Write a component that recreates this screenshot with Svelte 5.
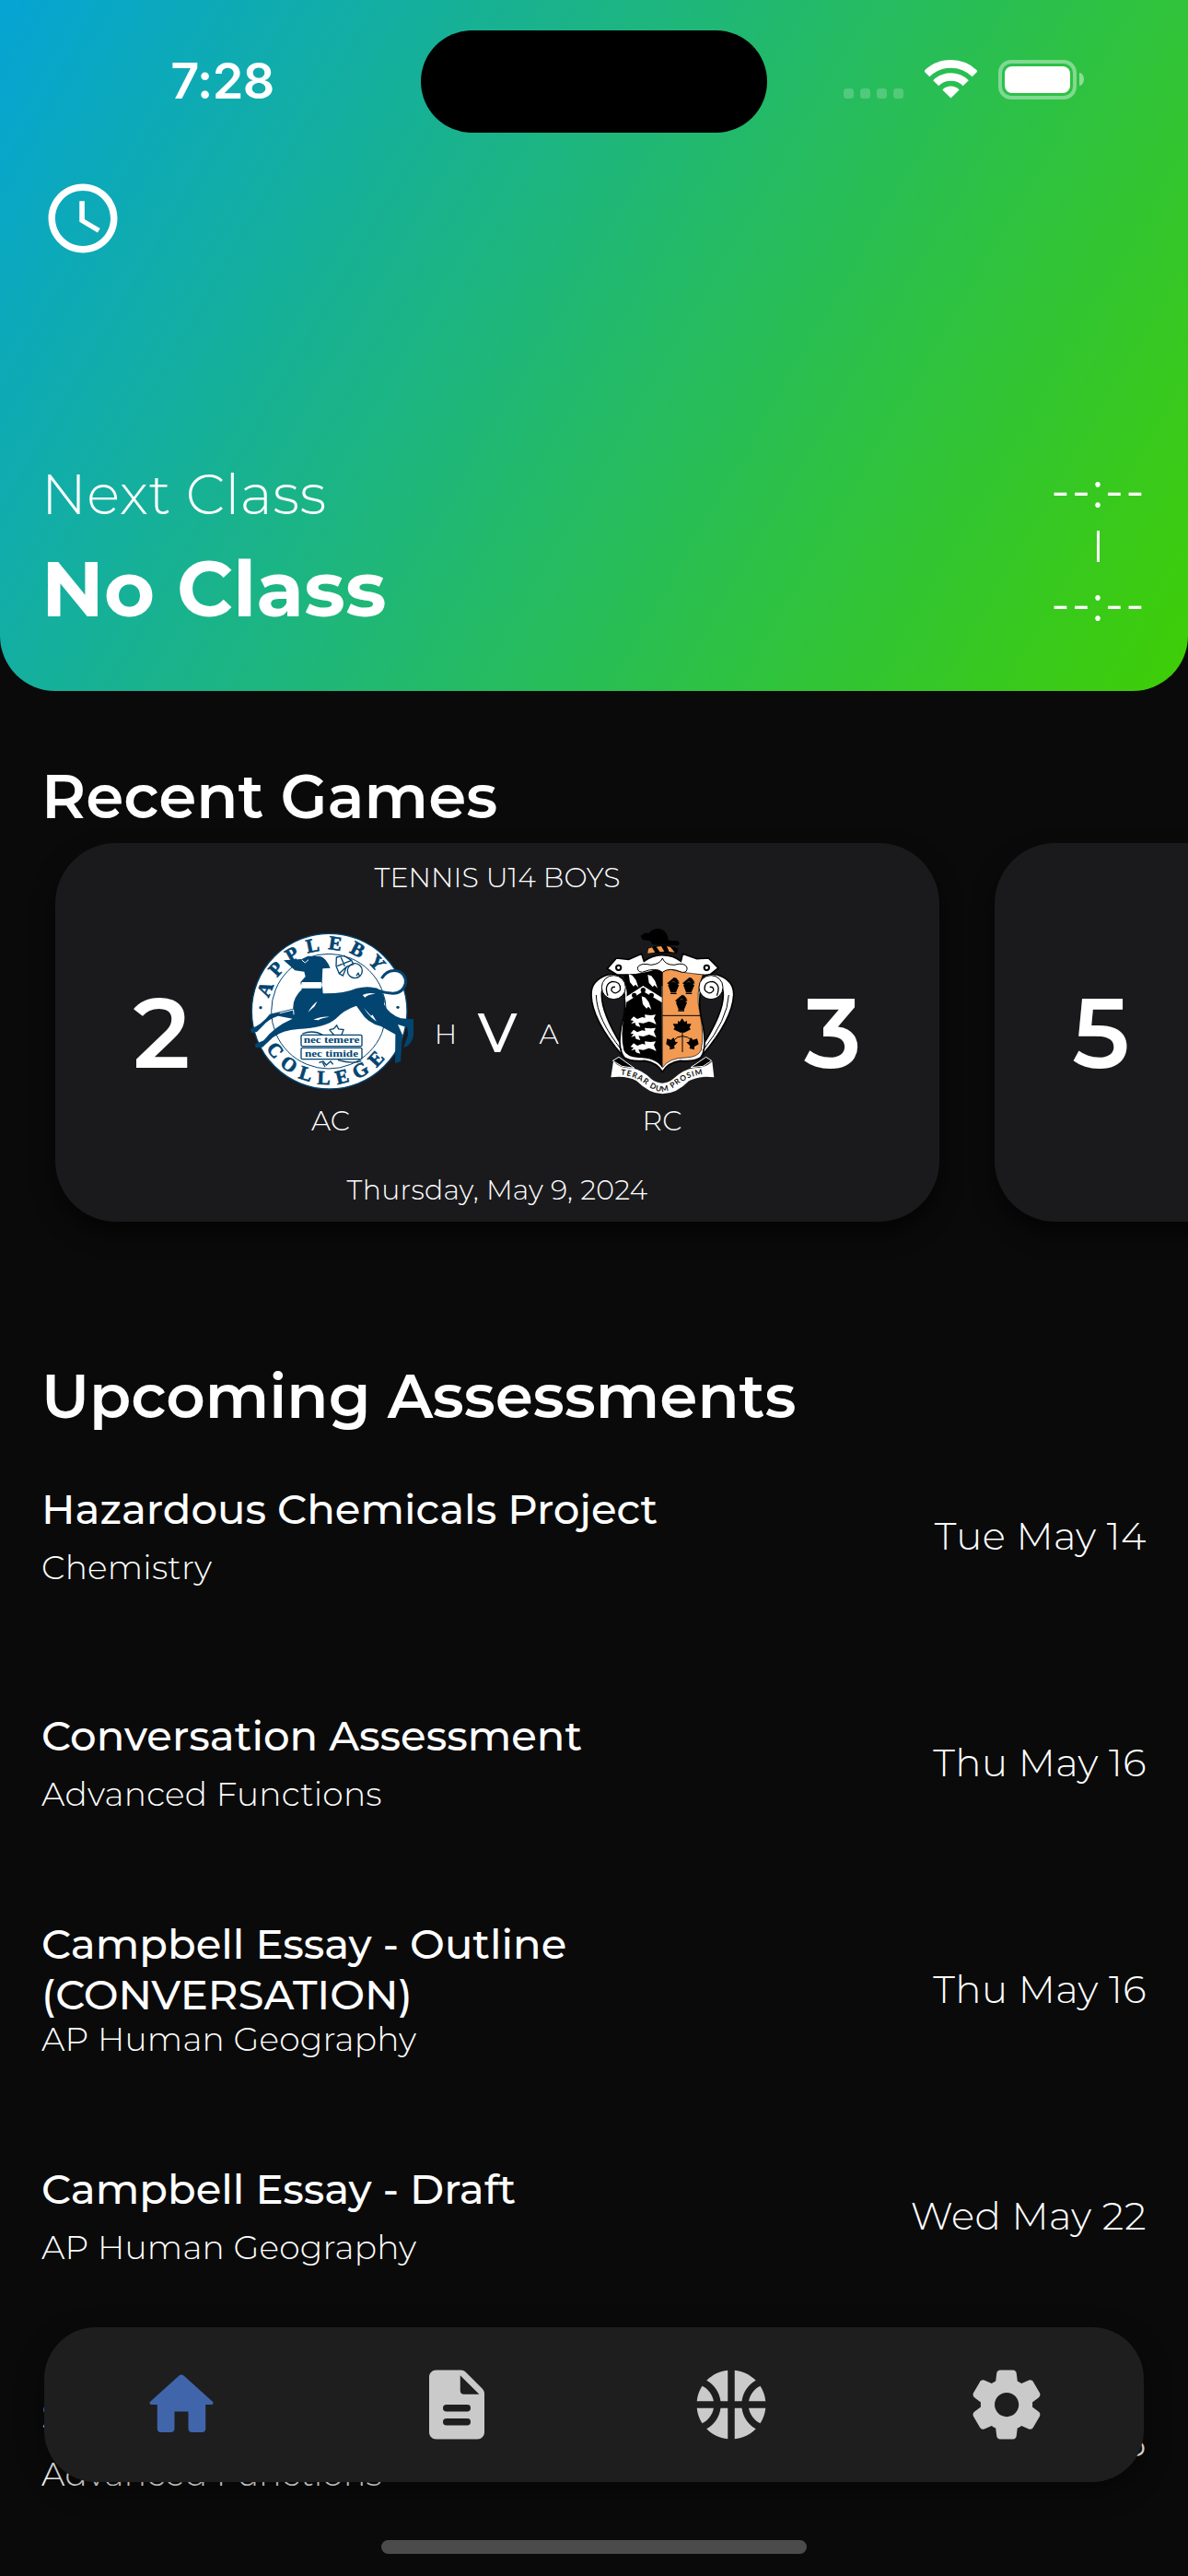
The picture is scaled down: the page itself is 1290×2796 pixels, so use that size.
<script>
  const assessments = [
    { title: ['Hazardous Chemicals Project'], course: 'Chemistry', due: 'Tue May 14' },
    { title: ['Conversation Assessment'], course: 'Advanced Functions', due: 'Thu May 16' },
    { title: ['Campbell Essay - Outline', '(CONVERSATION)'], course: 'AP Human Geography', due: 'Thu May 16' },
    { title: ['Campbell Essay - Draft'], course: 'AP Human Geography', due: 'Wed May 22' },
    { title: ['S'], course: 'Advanced Functions', due: 'Thu May 23' }
  ];
</script>

<div class="screen">
  <header>
    <div class="status">
      <div class="clock">7:28</div>
      <div class="island"></div>
      <div class="indicators">
        <div class="signal"><i></i><i></i><i></i><i></i></div>
        <svg class="wifi" viewBox="311 46 172 126">
          <g fill="none" stroke="#fff" stroke-width="26">
            <path d="M317.8 91.8A112 112 0 0 1 476.2 91.8" />
            <path d="M347.9 121.9A69.5 69.5 0 0 1 446.1 121.9" />
          </g>
          <path d="M397 171L369.4 143.4Q382 132 397 132T424.6 143.4Z" fill="#fff" />
        </svg>
        <div class="battery"><div class="charge"></div></div>
        <div class="nub"></div>
      </div>
    </div>
    <svg class="schedule" viewBox="0 0 24 24" fill="#fff">
      <path d="M11.99 2C6.47 2 2 6.48 2 12s4.47 10 9.99 10C17.52 22 22 17.52 22 12S17.52 2 11.99 2zM12 20c-4.42 0-8-3.58-8-8s3.58-8 8-8 8 3.58 8 8-3.58 8-8 8z" />
      <path d="M12.5 7H11v6l5.25 3.15.75-1.23-4.5-2.67z" />
    </svg>
    <div class="next">
      <div>
        <div class="label">Next Class</div>
        <div class="name">No Class</div>
      </div>
      <div class="times">
        <span>--:--</span>
        <b></b>
        <span>--:--</span>
      </div>
    </div>
  </header>

  <h2 class="games-title">Recent Games</h2>
  <div class="games">
    <article class="card">
      <div class="sport">TENNIS U14 BOYS</div>
      <div class="match">
        <div class="score">2</div>
        <div class="team">
          <svg viewBox="86 54 540 540">
            <defs>
              <path id="arc-top" d="M152 323A200 200 0 0 1 552 323" />
              <path id="arc-bottom" d="M114 323A238 238 0 0 0 590 323" />
            </defs>
            <circle cx="352" cy="323" r="253" fill="#fff" stroke="#034571" stroke-width="4" />
            <circle cx="350" cy="323" r="187" fill="none" stroke="#034571" stroke-width="3" />
            <g class="seal" fill="#034571">
              <text font-size="64" letter-spacing="25"><textPath href="#arc-top" startOffset="42">APPLEBY</textPath></text>
              <text font-size="64" letter-spacing="23"><textPath href="#arc-bottom" startOffset="126">COLLEGE</textPath></text>
              <circle cx="128" cy="311" r="5" />
              <circle cx="575" cy="310" r="5" />
            </g>
            <circle cx="563" cy="229" r="38" fill="#fff" />
            <path d="M522 216Q540 186 572 191Q603 200 600 232Q590 268 552 264Q520 262 500 250" fill="none" stroke="#034571" stroke-width="9" />
            <path d="M203 157L262 153L282 143L322 144Q340 148 355 182L330 184L328 228L331 265Q400 266 440 248Q490 236 520 256Q538 285 530 300Q545 332 585 346L632 349L626 402Q618 438 593 440L608 402L606 376L575 366L590 400L584 486L566 492L567 398L520 372Q475 360 455 326L440 305Q400 318 372 348Q340 376 250 381Q200 384 168 408L134 440L112 442L110 430L138 418Q170 374 232 347L185 338Q150 350 136 370L116 390L98 394L95 380Q130 368 158 332L234 314Q232 280 262 252L258 228L274 210L270 194L240 190Z" fill="#034571" />
            <path d="M262 228H325Q332 237 325 248H258M282 326Q296 302 313 290L303 308L298 312ZM460 270Q480 260 502 266Q476 267 468 278ZM300 350Q330 338 352 341Q325 345 316 352ZM464 312Q485 344 506 356L492 334L488 338Z" fill="#fff" />
            <path d="M190 329L235 318L236 334M262 156L273 165L284 155" fill="none" stroke="#fff" stroke-width="3" />
            <g fill="none" stroke="#034571" stroke-width="4">
              <circle cx="435" cy="191" r="24" />
              <path d="M375 147L400 142L424 157L430 170L408 178L396 207L384 200L374 176ZM377 176L424 157M390 148L402 176M384 200L408 178" />
              <path d="M440 207l6 -8l4 8M352 383l14 -3l10 -11l6 12l16 2l-6 16M352 383l14 16M318 490l14 -4l10 12l14 -12l8 10M330 490l8 14M264 396Q300 382 330 400" />
              <rect x="260" y="400" width="198" height="37" rx="4" fill="#fff" />
              <rect x="260" y="442" width="198" height="37" rx="4" fill="#fff" />
              <path d="M380 482Q430 496 456 484" />
            </g>
            <g class="motto" fill="#034571" font-size="32">
              <text x="268" y="427" textLength="182" lengthAdjust="spacingAndGlyphs">nec temere</text>
              <text x="272" y="470" textLength="174" lengthAdjust="spacingAndGlyphs">nec timide</text>
            </g>
          </svg>
          <div class="code">AC</div>
        </div>
        <div class="versus"><span>H</span><strong>V</strong><span>A</span></div>
        <div class="team">
          <svg viewBox="57 54 540 540">
            <defs>
              <path id="ribbon-text" d="M190 530Q240 532 280 566Q326 602 372 566Q412 532 474 527" />
            </defs>
            <path d="M262 75Q268 66 284 68Q296 52 318 54Q346 60 347 92L378 94Q388 102 378 109L296 106L288 94L264 90L256 76Z" fill="#000" />
            <path d="M280 120Q328 96 380 120L374 134L284 134Z" fill="#000" />
            <path d="M282 119L294 115L304 131L280 134ZM308 113L324 111L334 128L320 130ZM342 111L354 114L368 131L350 129Z" fill="#f29a52" />
            <g fill="#fff" stroke="#000" stroke-width="5">
              <path d="M148 184L178 150L218 154L260 136L268 160Q298 138 328 140Q362 140 388 160L394 136L440 152L478 150L510 182L480 206L420 204L328 196L232 204L180 204Z" />
              <path d="M206 230Q192 196 150 204Q94 222 96 270Q98 350 196 466L196 436Q130 330 130 270Q130 230 160 222" />
              <path d="M448 230Q460 196 506 204Q562 222 560 270Q556 350 458 466L458 436Q526 330 526 270Q526 230 496 222" />
              <path d="M198 238Q216 300 194 370Q180 446 204 474Q226 488 270 484Q310 490 328 520Q346 490 386 484Q430 488 452 474Q474 446 460 370Q440 300 456 238Z" />
            </g>
            <path d="M326 180Q260 204 200 204Q222 262 204 330Q190 400 202 450Q212 472 250 474Q306 474 327 506Z" fill="#000" />
            <path d="M328 180Q394 200 460 204Q434 260 450 330Q464 400 454 450Q444 472 404 474Q350 474 328 506Z" fill="#f29a52" stroke="#000" stroke-width="2" />
            <path d="M328 337H452" stroke="#000" stroke-width="3" />
            <path d="M328 150Q336 172 366 172Q400 162 408 180Q410 198 392 196Q350 178 328 196Q306 178 262 196Q244 194 248 178Q260 164 290 172Q320 170 328 150Z" fill="#fff" stroke="#000" stroke-width="3" />
            <g fill="#fff" stroke="#000" stroke-width="3">
              <circle cx="169" cy="245" r="39" />
              <circle cx="486" cy="245" r="39" />
              <path fill="none" stroke-width="4" d="M150 272Q136 236 164 226Q194 226 190 254Q176 272 162 256Q160 242 174 244M505 272Q520 236 492 226Q462 226 466 254Q480 272 494 256Q496 242 482 244" />
              <path fill="none" d="M112 270Q114 350 196 450M544 270Q540 350 460 450" />
            </g>
            <circle cx="185" cy="181" r="8" fill="#fff" stroke="#000" stroke-width="6" />
            <circle cx="472" cy="181" r="8" fill="#fff" stroke="#000" stroke-width="6" />
            <g fill="#fff">
              <path d="M206 278L265 240L326 278V294L265 258L210 294Z" />
              <path id="bird" d="M218 202L230 206L242 222L250 246L240 236L234 242L222 228Z" />
              <use href="#bird" x="62" y="2" />
              <use href="#bird" x="42" y="72" />
              <path id="lion" d="M224 352L234 340L246 348L262 342L272 344L270 334L290 336L306 334L300 346L308 366L296 360L284 356L266 362L250 360L256 374L242 370L238 360L226 364L234 354Z" />
              <use href="#lion" y="43" />
              <use href="#lion" y="87" />
            </g>
            <g fill="#000">
              <circle cx="265" cy="254" r="8" />
              <circle cx="236" cy="271" r="8" />
              <circle cx="292" cy="271" r="8" />
              <path id="boat" d="M346 238L364 226L382 238L372 262H355ZM343 232L366 212L384 232L376 234L364 224L350 236ZM362 216L372 214L384 228Z" />
              <path d="M354 263h20v4h-20zM404 263h20v4h-20zM379 319h20v4h-20z" />
              <use href="#boat" x="50" />
              <use href="#boat" x="26" y="57" />
              <path d="M392 346L400 358L408 354L408 364L422 364L416 376L420 382L400 392H386L364 382L368 376L362 364L378 364L378 354L384 358Z" />
              <path d="M343 412L356 416L364 408L370 422L378 424L366 436L368 444L352 448L352 438L340 430ZM441 412L428 416L420 408L414 422L406 424L418 436L416 444L432 448L432 438L446 430Z" />
            </g>
            <path d="M393 386V456M364 418Q376 404 393 404T424 418" fill="none" stroke="#000" stroke-width="3" />
            <path d="M186 472L236 508L196 502L166 484ZM470 472L420 506L460 502L488 484Z" fill="#000" stroke="#fff" stroke-width="3" />
            <path d="M168 486Q190 510 228 508Q262 514 292 544Q328 570 362 544Q396 512 430 508Q468 508 490 486L496 538Q446 532 414 550Q374 592 328 592Q286 592 244 550Q214 532 160 538Z" fill="#fff" />
            <text class="ribbon" font-size="25" letter-spacing="3" fill="#111"><textPath href="#ribbon-text" startOffset="2">TERAR DUM PROSIM</textPath></text>
          </svg>
          <div class="code">RC</div>
        </div>
        <div class="score">3</div>
      </div>
      <div class="date">Thursday, May 9, 2024</div>
    </article>
    <article class="card">
      <div class="sport"></div>
      <div class="match"><div class="score">5</div></div>
    </article>
  </div>

  <h2 class="assess-title">Upcoming Assessments</h2>
  <ul>
    {#each assessments as item}
      <li>
        <div class="task" class:multi={item.title.length > 1}>
          {#each item.title as line}<div class="task-title">{line}</div>{/each}
          <div class="course">{item.course}</div>
        </div>
        <div class="due">{item.due}</div>
      </li>
    {/each}
  </ul>

  <nav>
    <svg viewBox="0 0 24 24">
      <path d="M10 19v-5h4v5c0 .55.45 1 1 1h3c.55 0 1-.45 1-1v-7h1.7c.46 0 .68-.57.33-.87L12.67 3.6c-.38-.34-.96-.34-1.34 0l-8.36 7.53c-.34.3-.13.87.33.87H5v7c0 .55.45 1 1 1h3c.55 0 1-.45 1-1z" />
    </svg>
    <svg viewBox="0 0 24 24">
      <path fill-rule="evenodd" d="M6 2h7.17c.53 0 1.04.21 1.42.59l4.82 4.83c.38.37.59.88.59 1.41V20c0 1.1-.9 2-2 2H6c-1.1 0-2-.9-2-2V4c0-1.1.9-2 2-2zM13 3.5V8c0 .55.45 1 1 1h4.5zM9 12a1 1 0 0 0 0 2h6a1 1 0 0 0 0-2zM9 16a1 1 0 0 0 0 2h6a1 1 0 0 0 0-2z" />
    </svg>
    <svg viewBox="0 0 24 24">
      <path d="M17.09 11h4.86c-.16-1.61-.71-3.11-1.54-4.4-1.73.83-2.99 2.45-3.32 4.4zM6.91 11c-.33-1.95-1.59-3.57-3.32-4.4-.83 1.29-1.38 2.79-1.54 4.4h4.86zM15.07 11c.32-2.59 1.88-4.79 4.06-6-1.6-1.63-3.74-2.71-6.13-2.95V11h2.07zM8.93 11H11V2.05C8.61 2.29 6.46 3.37 4.87 5c2.18 1.21 3.74 3.41 4.06 6zM15.07 13H13v8.95c2.39-.24 4.54-1.32 6.13-2.95-2.18-1.21-3.74-3.41-4.06-6zM3.59 17.4c1.73-.83 2.99-2.45 3.32-4.4H2.05c.16 1.61.71 3.11 1.54 4.4zM17.09 13c.33 1.95 1.59 3.57 3.32 4.4.83-1.29 1.38-2.79 1.54-4.4h-4.86zM8.93 13c-.32 2.59-1.88 4.79-4.06 6 1.6 1.63 3.74 2.71 6.13 2.95V13H8.93z" />
    </svg>
    <svg viewBox="0 0 24 24">
      <path d="M19.5 12c0-.23-.01-.45-.03-.68l1.86-1.41c.4-.3.51-.86.26-1.3l-1.87-3.23c-.25-.44-.79-.62-1.25-.42l-2.15.91c-.37-.26-.76-.49-1.17-.68l-.29-2.31C14.8 2.38 14.37 2 13.87 2h-3.73c-.51 0-.94.38-1 .88l-.29 2.31c-.41.19-.8.42-1.17.68l-2.15-.91c-.46-.2-1-.02-1.25.42L2.41 8.62c-.25.44-.14.99.26 1.3l1.86 1.41c-.02.22-.03.44-.03.67s.01.45.03.68l-1.86 1.41c-.4.3-.51.86-.26 1.3l1.87 3.23c.25.44.79.62 1.25.42l2.15-.91c.37.26.76.49 1.17.68l.29 2.31c.06.5.49.88.99.88h3.73c.5 0 .93-.38.99-.88l.29-2.31c.41-.19.8-.42 1.17-.68l2.15.91c.46.2 1 .02 1.25-.42l1.87-3.23c.25-.44.14-.99-.26-1.3l-1.86-1.41c.03-.23.04-.45.04-.68zM12.04 15.5c-1.93 0-3.5-1.57-3.5-3.5s1.57-3.5 3.5-3.5 3.5 1.57 3.5 3.5-1.57 3.5-3.5 3.5z" />
    </svg>
  </nav>
  <div class="home-indicator"></div>
</div>

<style>
  :global(body) { background: #0a0a0a; }
  .screen {
    position: relative;
    width: 1290px;
    height: 2796px;
    overflow: hidden;
    background: #0a0a0a;
    color: #fff;
    font-family: Montserrat, Inter, sans-serif;
    font-weight: 300;
    white-space: nowrap;
  }
  header {
    display: flex;
    flex-direction: column;
    height: 750px;
    border-radius: 0 0 60px 60px;
    background: linear-gradient(120.2deg, #05a4d4, #3fce05);
  }
  .status {
    display: grid;
    grid-template-columns: 457px 376px 457px;
    height: 192px;
    padding-top: 33px;
    box-sizing: border-box;
  }
  .clock {
    padding-left: 26px;
    text-align: center;
    font: 600 54px/110px Inter, sans-serif;
    letter-spacing: -0.5px;
  }
  .island { height: 111px; border-radius: 56px; background: #000; }
  .indicators { display: flex; align-items: flex-end; height: 75px; padding-left: 83px; }
  .signal { display: flex; gap: 7px; margin: 0 23px 1px 0; }
  .signal i { width: 11px; height: 11px; border-radius: 3.5px; background: rgba(255, 255, 255, .2); }
  .wifi { width: 57px; height: 42px; margin: 0 23px 1px 0; }
  .battery {
    box-sizing: border-box;
    width: 85px;
    height: 43px;
    padding: 3px;
    border: 4px solid rgba(255, 255, 255, .4);
    border-radius: 14px;
  }
  .charge { height: 29px; border-radius: 8px; background: #fff; }
  .nub { width: 5px; height: 14px; margin: 0 0 15px 3px; border-radius: 0 5px 5px 0 / 0 7px 7px 0; background: rgba(255, 255, 255, .45); }
  .schedule { width: 90px; height: 90px; margin-left: 45px; }
  .next { display: flex; justify-content: space-between; margin-top: 215px; padding: 0 45px; }
  .label { font-size: 60px; line-height: 80px; letter-spacing: 0.5px; }
  .name { margin-top: 13px; font-size: 84px; line-height: 98px; font-weight: 700; letter-spacing: 0.1px; }
  .times { display: flex; flex-direction: column; align-items: center; width: 106px; margin-top: 6px; font-size: 52px; font-weight: 400; }
  .times span { line-height: 60px; letter-spacing: 2.6px; margin-right: -2.6px; }
  .times b { width: 3px; height: 34px; margin: 13px 0 16px; background: #fff; }

  h2 { margin: 0; padding-left: 45px; font-size: 66px; line-height: 80px; font-weight: 600; }
  .games-title { padding-top: 75px; }
  .assess-title { padding-top: 150px; }
  .games { display: flex; gap: 60px; padding: 10px 0 0 60px; }
  .card {
    flex: 0 0 960px;
    height: 411px;
    border-radius: 66px;
    background: #1a1a1c;
    box-shadow: 0 12px 24px rgba(0, 0, 0, .6);
  }
  .sport, .date, .code, .versus span { font-size: 30px; letter-spacing: 0.1px; }
  .sport { height: 75px; line-height: 75px; text-align: center; }
  .match { display: grid; grid-template-columns: 230px 138px 222px 138px 232px; height: 261px; }
  .score { padding-left: 1px; text-align: center; font-size: 107px; line-height: 261px; font-weight: 600; }
  .team { display: flex; flex-direction: column; align-items: center; padding-top: 18px; }
  .team svg { flex: none; width: 180px; height: 180px; }
  .code { margin-top: 7px; line-height: 44px; }
  .seal, .motto { font-family: "Liberation Serif", serif; font-weight: 700; }
  .seal text { stroke: #034571; stroke-width: 2; }
  .ribbon { font-family: Lato, sans-serif; font-weight: 700; }
  .versus { display: flex; justify-content: center; align-items: center; padding-left: 2px; }
  .versus span, .versus strong { width: 56px; text-align: center; }
  .versus span { padding-top: 3px; }
  .versus strong { font-size: 60px; font-weight: 500; }
  .date { line-height: 81px; text-align: center; letter-spacing: 0.25px; }

  ul { margin: -12px 0 0; padding: 0; list-style: none; }
  li { display: flex; justify-content: space-between; align-items: center; height: 246px; padding: 0 45px; }
  .task-title { font-size: 45px; line-height: 54.5px; font-weight: 500; }
  .course { margin-top: 14px; font-size: 36px; line-height: 44px; letter-spacing: 0.22px; }
  .multi .course { margin-top: -1px; }
  .due { font-size: 42px; line-height: 54px; letter-spacing: 0.42px; }

  nav {
    position: absolute;
    left: 48px;
    top: 2526px;
    display: flex;
    justify-content: space-around;
    align-items: center;
    width: 1194px;
    height: 168px;
    border-radius: 56px;
    background: #1e1e1e;
    box-shadow: 0 9px 30px rgba(0, 0, 0, .4);
  }
  nav svg { width: 90px; height: 90px; fill: #cacaca; }
  nav svg:first-child { fill: #4065ab; }
  .home-indicator {
    position: absolute;
    left: 414px;
    top: 2757px;
    width: 462px;
    height: 15px;
    border-radius: 8px;
    background: #4b4b4b;
  }
</style>
